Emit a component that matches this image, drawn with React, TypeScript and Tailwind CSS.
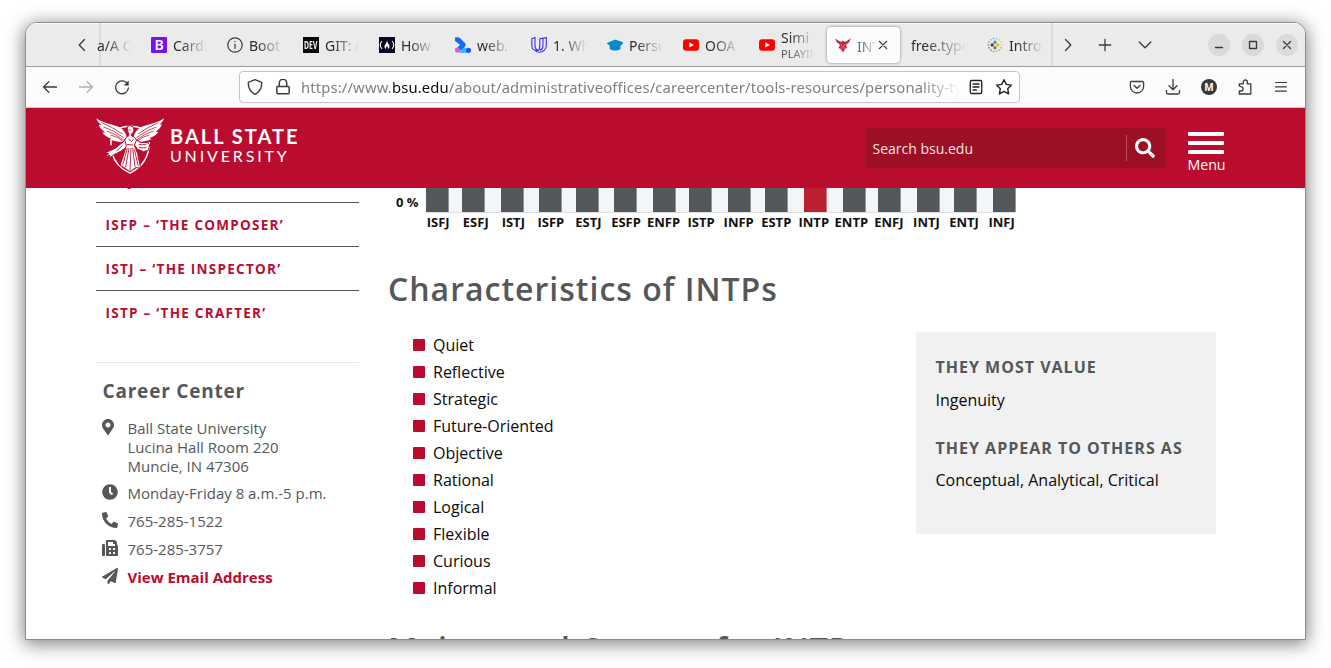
import React from "react";
import { FaMapMarkerAlt, FaClock, FaPhoneAlt, FaFax, FaPaperPlane, FaSearch } from "react-icons/fa";

const types = [
  ["ISFJ", 426], ["ESFJ", 462], ["ISTJ", 501], ["ISFP", 539], ["ESTJ", 576], ["ESFP", 614], ["ENFP", 653], ["ISTP", 689],
  ["INFP", 728], ["ESTP", 765], ["INTP", 804], ["ENTP", 843], ["ENFJ", 878], ["INTJ", 917], ["ENTJ", 954], ["INFJ", 993],
] as const;

const traits = ["Quiet", "Reflective", "Strategic", "Future-Oriented", "Objective", "Rational", "Logical", "Flexible", "Curious", "Informal"];

const fade = "[mask-image:linear-gradient(to_right,#000_25%,transparent_100%)]";

function Stroke({ d, size = 16, w = 1.3, color = "#3a3a3d", className = "" }: { d: string; size?: number; w?: number; color?: string; className?: string }) {
  return (
    <svg width={size} height={size} viewBox="0 0 16 16" fill="none" stroke={color} strokeWidth={w} strokeLinecap="round" strokeLinejoin="round" className={`shrink-0 ${className}`}>
      <path d={d} />
    </svg>
  );
}

function Tab({ icon, label, sub }: { icon?: React.ReactNode; label: string; sub?: string }) {
  return (
    <div className="flex h-[43px] w-[76px] shrink-0 items-center gap-[6px] pl-2">
      {icon}
      <div className={`min-w-0 overflow-hidden ${icon ? "w-[34px]" : "w-[56px]"} ${fade}`}>
        <div className={`whitespace-nowrap text-[14px] text-[#2e2e31] ${sub ? "leading-[17px]" : "pt-[2px] leading-[20px]"}`}>{label}</div>
        {sub && <div className="whitespace-nowrap text-[11px] leading-[15px] text-[#555]">{sub}</div>}
      </div>
    </div>
  );
}

function YouTube() {
  return (
    <svg width="16" height="16" viewBox="0 0 16 16" className="shrink-0">
      <rect x="0" y="2.3" width="16" height="11.5" rx="3" fill="#f00" />
      <path d="M6.3 5.3v5.2l4.6-2.6z" fill="#fff" />
    </svg>
  );
}

function Bootstrap() {
  return (
    <div className="flex size-4 shrink-0 items-center justify-center rounded-[1px] bg-[#7512f8]">
      <span className="text-[14px] leading-none font-semibold text-white">B</span>
    </div>
  );
}

function Dev() {
  return (
    <div className="flex size-4 shrink-0 items-center justify-center bg-[#0a0a0a]">
      <span className="scale-x-[0.68] scale-y-110 text-[10px] leading-none font-bold text-white">DEV</span>
    </div>
  );
}

function Fcc() {
  return (
    <svg width="16" height="16" viewBox="0 0 16 16" className="shrink-0">
      <rect width="16" height="16" fill="#0a0a23" />
      <path d="M3 4C.8 6.5.8 9.500 3 12M13 4C15.200 6.500 15.200 9.500 13 12" fill="none" stroke="#fff" strokeWidth="1.100" />
      <path d="M8 3.800C8.500 6 10.500 7.500 10.500 9.500C10.500 10.500 10 11.500 9 12C9.300 10.500 8.500 10 8 9C7.300 10 6.800 10.700 7 12C6 11.500 5.500 10.500 5.500 9.500C5.500 8 7.500 6.500 8 3.800z" fill="#fff" />
    </svg>
  );
}

function WebDev() {
  return (
    <svg width="16" height="16" viewBox="0 0 16 16" className="shrink-0">
      <path d="M0 11.500C1.500 10 4 10.500 6.500 11L4.500 15.500H1.500C0 15.500-.5 13 0 11.500z" fill="#d35cf5" />
      <path d="M5.500 12.500L9 10.500L13 12L12 16H4.500z" fill="#4bb4ff" />
      <path d="M0 .5C2 0 4 0 5.500 1.500L10 6C11 7.200 10.800 8.500 10 9.500L6.500 13L2.500 10.500L5 7.700L0 4z" fill="#0f6bff" />
      <circle cx="13.500" cy="13.300" r="2.600" fill="#0f5cf5" />
    </svg>
  );
}

function Udacity() {
  return (
    <svg width="16" height="16" viewBox="0 0 16 16" className="shrink-0" fill="none" stroke="#3b2df0" strokeWidth="1.100">
      <path d="M.8 1.800L4 .6V8.500C4 11 5 12.600 6.500 13.500C3 14 .8 11.800.8 8.500zM8.800 1.800L15.300.6V8.500C15.300 12.500 12 15.300 8.500 15.300C6.500 15.300 5.200 14.700 4.200 13.500M8.800 1.800V9.500C8.800 11.500 8 13 6.500 13.500M12 1.400V9C12 11 11 12.500 9 13.500" />
    </svg>
  );
}

function Cap() {
  return (
    <svg width="16" height="16" viewBox="0 0 16 16" className="shrink-0" fill="#0788ce">
      <path d="M0 6L7 2.900C8 2.600 8.500 2.700 9.500 3.100L16 5.200L15.300 7.500L9 10.500L6 10.300L.3 7z" />
      <path d="M2.500 7L7 10L13.500 8V12C10 14 6 14 2.800 12z" />
    </svg>
  );
}

function Dots() {
  const ring = Array.from({ length: 14 }, (_, i) => {
    const a = (i / 14) * Math.PI * 2;
    return [8 + Math.cos(a) * 6.6, 8 + Math.sin(a) * 6.6];
  });
  const hues = ["#f2c51c", "#8fae3d", "#7da14b", "#91a750", "#7b8c55", "#925070", "#7b3356", "#8d4a68", "#4aa7b5", "#49b3c5", "#38aac0", "#7dbfc8", "#d0b85a", "#f0c837"];
  return (
    <svg width="16" height="16" viewBox="0 0 16 16" className="shrink-0">
      {ring.map(([x, y], i) => <circle key={i} cx={x} cy={y} r=".8" fill={hues[i]} opacity=".85" />)}
      <circle cx="8" cy="5.200" r="1.700" fill="#32a9bd" />
      <circle cx="10.800" cy="8" r="1.700" fill="#f4c300" />
      <circle cx="8" cy="10.800" r="1.700" fill="#5f9148" />
      <circle cx="5.200" cy="8" r="1.700" fill="#7a2b55" />
    </svg>
  );
}

function Cardinal() {
  return (
    <svg width="16" height="14" viewBox="0 0 16 14" className="shrink-0">
      <path d="M0 .5L5 3.500L6.800 3.800L8 2.500L9.200 3.800L11 3.500L16 .3L14 4.500L12.500 5.500L11 7L12 10L10.500 10.500L8.500 13.700L7.500 13.700L5.500 11L3.500 10L5 7L3.500 5.500L2 4.500z" fill="#c4263d" />
      <path d="M6 6L7 8.500L6.500 11.500M10 6L8.700 8.500L9.300 11.500" stroke="#fff" strokeWidth=".5" fill="none" opacity=".7" />
    </svg>
  );
}

function Emblem() {
  return (
    <svg width="80" height="66" viewBox="0 0 240 198" className="shrink-0">
      <g fill="none" stroke="#fff" strokeWidth="4.500">
        <path d="M86 49Q120 37 156 49" />
        <path d="M63 84V100M66 124C74 152 95 172 120 183C155 166 178 140 178 90" />
      </g>
      <g fill="#fff">
        <path d="M19 19C36 32 60 36 79 42C96 47 106 58 110 74L110 82L99 90C80 90 68 86 57 82L64 80C52 76 43 69 37 62L45 61C35 54 29 46 26 38L34 39C25 32 21 26 19 19z" />
        <path d="M222 19C205 32 180 36 162 42C145 47 135 58 131 74L131 82L143 90C161 90 174 86 185 81L178 79C190 75 199 68 205 61L197 60C207 53 213 45 216 37L208 38C217 31 220 25 222 19z" />
      </g>
      <g fill="none" stroke="#ba0c2f" strokeWidth="2.300">
        <path d="M35 32Q65 44 98 66M41 45Q70 54 101 77M50 57Q77 65 104 86M62 69Q82 73 102 90M205 32Q175 44 144 66M199 45Q170 54 140 77M190 57Q163 65 137 86M178 69Q158 73 140 89" />
      </g>
      <g fill="#fff" stroke="#ba0c2f" strokeWidth="3">
        <path d="M110 80L95 93L77 108L60 116L47 122L56 125L46 134L60 130L57 139L72 128L92 118L112 104zM136 82L150 91L172 92L179 98L175 115L160 119L143 112L132 97z" />
        <path d="M112 44Q120 37 129 44L132 55Q129 66 123 67L125 72Q139 76 139 86L133 100L143 125L152 168L136 167L120 180L104 168L90 160L103 122L109 100L104 84Q107 74 116 72L117 66Q110 58 112 44z" />
      </g>
      <g fill="none" stroke="#ba0c2f" strokeWidth="2.600">
        <path d="M117 108L107 166M123 108L120 177M128 108L135 164M112 108L98 160M133 112L145 162M115 80L124 89L131 81M110 97L130 99M115 54H122M146 98H169M146 107H169M98 100L80 117" />
      </g>
    </svg>
  );
}

function Chart() {
  return (
    <svg width="640" height="50" viewBox="386 188 640 50" className="block" fontFamily="'Open Sans'" fontWeight="700" fill="#111">
      <rect x="426" y="188" width="589.500" height="24" fill="#f4f5f8" />
      <rect x="426" y="212" width="589.500" height="1" fill="#dddddf" />
      <text x="396" y="207.300" fontSize="12.800" textLength="22.500" lengthAdjust="spacingAndGlyphs">0 %</text>
      {types.map(([name, x], i) => (
        <g key={name}>
          <rect x={x} y="188" width="22.600" height="24" fill={name === "INTP" ? "#bb2031" : "#54585a"} />
          <text x={438.200 + i * 37.56} y="227" fontSize="13" textAnchor="middle">{name}</text>
        </g>
      ))}
    </svg>
  );
}

function WindowButton({ d }: { d: string }) {
  return (
    <div className="flex size-[22px] items-center justify-center rounded-full bg-[#dadada]">
      <Stroke d={d} w={1.3} />
    </div>
  );
}

function TabStrip() {
  return (
    <div className="flex h-11 shrink-0 border-b border-[#9c9c9c] bg-[#ebebeb] shadow-[inset_0_1px_0_#fafafa]">
      <div className="flex w-[75px] items-center border-r-2 border-[#dcdcdc] pl-[48px]">
        <Stroke d="M10.500 2.500L5.200 8l5.300 5.500" />
      </div>
      <div className="flex w-[42px] items-center">
        <span className={`-ml-[4px] w-[34px] overflow-hidden pt-[2px] text-[14px] whitespace-nowrap text-[#2e2e31] ${fade}`}>a/A C</span>
      </div>
      <Tab icon={<Bootstrap />} label="Cards" />
      <Tab icon={<Stroke d="M8 .8a7.200 7.200 0 1 0 0 14.400A7.200 7.200 0 0 0 8 .8zM8 7v4.500M8 4.400v.2" w={1.2} />} label="Boot" />
      <Tab icon={<Dev />} label="GIT: r" />
      <Tab icon={<Fcc />} label="How" />
      <Tab icon={<WebDev />} label="web.c" />
      <Tab icon={<Udacity />} label="1. Wh" />
      <Tab icon={<Cap />} label="Perso" />
      <Tab icon={<YouTube />} label="OOA" />
      <Tab icon={<YouTube />} label="Simi -" sub="PLAYIN" />
      <div className="w-[76px] shrink-0 py-[4px]">
        <div className="flex h-[36px] w-[73px] items-center rounded bg-[#fcfcfc] pl-2 shadow-[0_0_3px_rgba(0,0,0,0.45)]">
          <Cardinal />
          <span className={`ml-[6px] w-[20px] overflow-hidden pt-[2px] text-[14px] whitespace-nowrap text-[#2e2e31] opacity-70 ${fade}`}>INT</span>
          <Stroke d="M3 3l10 10M13 3L3 13" size={12} w={1.500} />
        </div>
      </div>
      <Tab label="free.type" />
      <Tab icon={<Dots />} label="Intro" />
      <div className="ml-[-4px] flex flex-1 items-center border-l-2 border-[#dcdcdc] pl-[7px]">
        <Stroke d="M5.500 2.500L10.800 8l-5.300 5.500" />
        <Stroke d="M8 2.300v11.400M2.300 8h11.400" className="ml-[21px]" />
        <Stroke d="M2.200 5L8 10.800 13.800 5" className="ml-[24px]" />
        <div className="ml-auto flex gap-3 pr-[7px]">
          <WindowButton d="M4.500 10.500h7" />
          <WindowButton d="M4.500 4.500h7v7h-7z" />
          <WindowButton d="M4.500 4.500l7 7M11.500 4.500l-7 7" />
        </div>
      </div>
    </div>
  );
}

function NavBar() {
  return (
    <div className="flex h-[41px] shrink-0 items-center border-b border-[#cccccc] bg-[#fbfbfb]">
      <Stroke d="M14.500 8H1.500M6.800 2.700L1.500 8l5.300 5.300" className="ml-[16px]" />
      <Stroke d="M1.500 8h13M9.200 2.700L14.500 8l-5.300 5.300" color="#b0b0b0" className="ml-[20px]" />
      <svg width="16" height="16" viewBox="0 0 16 16" className="ml-[20px]" fill="none" stroke="#3a3a3d" strokeWidth="1.300">
        <path d="M13.800 5.500A6.400 6.400 0 1 0 14.400 9" strokeLinecap="round" />
        <path d="M14.700 1.500V6.500H9.700z" fill="#3a3a3d" stroke="none" />
      </svg>
      <div className="ml-[109px] flex h-8 w-[781px] items-center rounded border border-[#c4c4c4] bg-white pl-[7px]">
        <Stroke d="M8 .7L14.700 3.300C15 8.500 12.500 13 8 15.300C3.500 13 1 8.500 1.300 3.300z" w={1.400} />
        <Stroke d="M2.800 7.500h10.400a1 1 0 0 1 1 1v5.200a1 1 0 0 1-1 1H2.800a1 1 0 0 1-1-1V8.500a1 1 0 0 1 1-1zM4.300 7.300V4a3.700 3.700 0 0 1 7.400 0v3.300" w={1.500} className="ml-3" />
        <div className="ml-[10px] w-[660px] overflow-hidden text-[14.800px] tracking-[0.140px] whitespace-nowrap text-[#808083] [mask-image:linear-gradient(to_right,#000_94%,transparent)]">
          https://www.<span className="text-[#0c0c0d]">bsu.edu</span>/about/administrativeoffices/careercenter/tools-resources/personality-ty
        </div>
        <Stroke d="M3.500 1.500h9a1.200 1.200 0 0 1 1.200 1.200v10.600a1.200 1.200 0 0 1-1.200 1.200h-9a1.200 1.200 0 0 1-1.200-1.200V2.700a1.200 1.200 0 0 1 1.200-1.200zM5 5h6M5 8h6M5 11h3.500" w={1.300} color="#222" className="ml-[7px]" />
        <Stroke d="M8 .7l2.300 4.700 5.100.7-3.700 3.600.9 5.200L8 12.400l-4.600 2.500.9-5.200L.6 6.100l5.100-.7z" w={1.400} color="#222" className="ml-3" />
      </div>
      <div className="ml-auto flex items-center gap-5 pr-[16px]">
        <Stroke d="M2.700 2.500h10.600a1.300 1.300 0 0 1 1.300 1.300v3.900a6.600 6.300 0 0 1-13.200 0V3.800A1.300 1.300 0 0 1 2.700 2.500zM5 6.500L8 9.300l3-2.800" w={1.300} />
        <Stroke d="M8 .5v10M4 6.800l4 4 4-4M1.500 11.500v2a1.500 1.500 0 0 0 1.500 1.500h10a1.500 1.500 0 0 0 1.500-1.500v-2" />
        <div className="flex size-4 items-center justify-center rounded-full bg-[#38383a] text-[10px] leading-none font-bold text-white">M</div>
        <Stroke d="M2.300 7V4.800h4V3a2 2 0 0 1 4 0v1.800h3.500V15H2.300v-3H4a2 2 0 0 0 0-4.300z" w={1.300} />
        <Stroke d="M2.500 3.500h11M2.500 7.800h11M2.500 12.100h11" w={1.200} />
      </div>
    </div>
  );
}

function SiteHeader() {
  return (
    <header className="flex h-20 shrink-0 bg-[#ba0c2f] pl-[64px] text-white">
      <div className="pt-[4px]"><Emblem /></div>
      <div className="flex w-[696px] flex-col pt-[18px] font-['Lato'] whitespace-nowrap">
        <div className="text-[20px] leading-5 font-bold tracking-[2px]">BALL STATE</div>
        <div className="mt-px text-[16px] leading-[18px] tracking-[2.850px]">UNIVERSITY</div>
      </div>
      <div className="mt-5 flex h-10 w-[300px] items-center bg-[#9d0f24]">
        <span className="w-[260px] pl-[6.500px] text-[14px] text-[#f6e3e6]">Search bsu.edu</span>
        <div className="flex h-[26px] items-center border-l border-[#bd5362] pl-[8px]">
          <FaSearch size={20} />
        </div>
      </div>
      <div className="ml-[22px] flex w-9 flex-col items-center pt-6">
        <div className="flex flex-col gap-[5px]">
          <div className="h-1 w-9 rounded-[1px] bg-white" />
          <div className="h-1 w-9 rounded-[1px] bg-white" />
          <div className="h-1 w-9 rounded-[1px] bg-white" />
        </div>
        <span className="mt-[1px] pl-px text-[14.200px] leading-5">Menu</span>
      </div>
    </header>
  );
}

function Contact({ icon, className = "mb-[9px]", children }: { icon: React.ReactNode; className?: string; children: React.ReactNode }) {
  return (
    <div className={`flex text-[15px] leading-[19px] text-[#54585a] ${className}`}>
      <div className="-ml-[0.200px] w-[25.200px] shrink-0">{icon}</div>
      <div className="whitespace-nowrap">{children}</div>
    </div>
  );
}

function Sidebar() {
  const link = "h-11 border-b border-[#54585a] pl-[9.500px] text-[13.500px] leading-[45px] font-bold tracking-[1.270px] text-[#ba0c2f] whitespace-nowrap";
  return (
    <aside className="w-[263px] shrink-0">
      <nav className="-mt-[29px]">
        <div className={link}>ISFJ – ‘THE PROTECTOR’</div>
        <div className={link}>ISFP – ‘THE COMPOSER’</div>
        <div className={link}>ISTJ – ‘THE INSPECTOR’</div>
        <div className={`${link} border-b-0`}>ISTP – ‘THE CRAFTER’</div>
      </nav>
      <div className="mt-[27px] border-t border-[#e6e6e6] pt-[14px] pl-[6.500px]">
        <h3 className="mb-[14px] text-[19px] leading-7 font-bold tracking-[0.800px] text-[#54585a]">Career Center</h3>
        <Contact className="mb-2" icon={<FaMapMarkerAlt size={16} className="-ml-[2px]" />}>
          Ball State University<br />Lucina Hall Room 220<br />Muncie, IN 47306
        </Contact>
        <Contact icon={<FaClock size={16} />}>Monday-Friday 8 a.m.-5 p.m.</Contact>
        <Contact icon={<FaPhoneAlt size={16} />}>765-285-1522</Contact>
        <Contact icon={<FaFax size={16} />}>765-285-3757</Contact>
        <Contact icon={<FaPaperPlane size={16} />}><span className="font-bold text-[#ba0c2f]">View Email Address</span></Contact>
      </div>
    </aside>
  );
}

function MainColumn() {
  const heading = "text-[32px] leading-10 font-semibold tracking-[1px] whitespace-nowrap text-[#54585a]";
  return (
    <main className="ml-[27px] w-[830px] shrink-0">
      <Chart />
      <div className="pl-[2px]">
        <h2 className={`mt-[31px] ${heading}`}>Characteristics of INTPs</h2>
        <div className="mt-[23px] flex justify-between">
          <ul className="pl-[25px] text-base leading-[27px] text-[#0a0a0a]">
            {traits.map((t) => (
              <li key={t} className="flex items-center">
                <span className="mr-2 mb-px size-3 rounded-[1px] bg-[#ba0c2f]" />
                {t}
              </li>
            ))}
          </ul>
          <div className="h-[202px] w-[300px] bg-[#f1f1f1] pt-[23px] pl-[19.500px] text-base leading-6 whitespace-nowrap text-[#0a0a0a]">
            <h4 className="font-bold tracking-[1px] text-[#54585a]">THEY MOST VALUE</h4>
            <p className="mt-[9px]">Ingenuity</p>
            <h4 className="mt-6 font-bold tracking-[1px] text-[#54585a]">THEY APPEAR TO OTHERS AS</h4>
            <p className="mt-[8px]">Conceptual, Analytical, Critical</p>
          </div>
        </div>
        <h2 className={`mt-[27px] ${heading}`}>Majors and Careers for INTPs</h2>
      </div>
    </main>
  );
}

export default function App() {
  return (
    <div className="h-[668px] w-[1331px] overflow-hidden bg-white pt-[22px] pl-[25px] font-['Open_Sans',sans-serif]">
      <div className="flex h-[618px] w-[1281px] flex-col overflow-hidden rounded-t-[12px] border border-[#8c8c8c] bg-white shadow-[0_3px_18px_1px_rgba(0,0,0,0.5)]">
        <div className="contents font-['Noto_Sans',sans-serif]">
          <TabStrip />
          <NavBar />
        </div>
        <SiteHeader />
        <div className="flex min-h-0 flex-1 overflow-hidden pl-[70px]">
          <Sidebar />
          <MainColumn />
        </div>
      </div>
    </div>
  );
}
